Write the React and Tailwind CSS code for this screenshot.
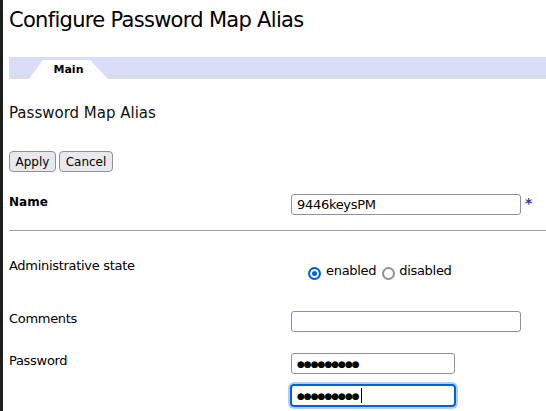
import React from "react";

function Radio({ checked }) {
  return (
    <span
      className={
        "mt-[4px] box-border inline-block h-[13px] w-[13px] shrink-0 rounded-full bg-white " +
        (checked
          ? "border-2 border-[#0060df] shadow-[inset_0_0_0_2px_#ffffff,inset_0_0_0_6px_#0060df]"
          : "border-2 border-[#8f8f9d]")
      }
    />
  );
}

function Dots({ caret }) {
  return (
    <span className="flex h-full items-center pl-[5px]">
      <span className="text-[9px] leading-[10px] tracking-[-1px] text-black">●●●●●●●●●</span>
      {caret && <span className="ml-[2px] inline-block h-[15px] w-[1px] bg-black" />}
    </span>
  );
}

export default function App() {
  return (
    <div className="flex h-[411px] w-[546px] overflow-hidden bg-white font-['DejaVu_Sans',sans-serif] text-black">
      <div className="w-[3px] shrink-0 bg-[#1e1e1e]" />
      <div className="flex min-w-0 flex-1 flex-col pl-[6px]">
        <h1 className="pt-[8px] text-[21px] leading-[24px] tracking-[-0.7px] font-normal text-black">
          Configure Password Map Alias
        </h1>

        <div className="mt-[25px] flex h-[22px] bg-[#d9ddf7] pl-[20px] shadow-[inset_0_-3px_0_#dddddd]">
          <div className="mt-[3px] flex h-[19px] w-[79px] items-center justify-center bg-white pb-[1px] text-[11px] font-bold leading-[13px] [clip-path:polygon(14px_0,61px_0,79px_100%,0_100%)]">
            Main
          </div>
        </div>

        <h2 className="mt-[25px] text-[15px] leading-[18px] font-normal text-[#111]">
          Password Map Alias
        </h2>

        <div className="mt-[29px] flex gap-[3px]">
          <button className="box-border h-[21px] w-[47px] rounded-[4px] border border-[#8f8f9d] bg-[#e9e9ed] text-[12px] leading-[14px] text-black">
            Apply
          </button>
          <button className="box-border h-[21px] w-[54px] rounded-[4px] border border-[#8f8f9d] bg-[#e9e9ed] text-[12px] leading-[14px] text-black">
            Cancel
          </button>
        </div>

        <div className="mt-[22px] grid grid-cols-[282px_1fr] text-[13px] leading-[16px] tracking-[-0.3px]">
          <div className="pt-[1px] text-[12px] leading-[14px] font-bold tracking-normal">Name</div>
          <div className="flex items-start">
            <div className="box-border flex h-[21px] w-[230px] items-center rounded-[3px] border border-[#8f8f9d] pl-[5px]">
              9446keysPM
            </div>
            <span className="ml-[4px] mt-[1px] text-[14px] font-bold leading-[16px] text-[#3b2fa8]">*</span>
          </div>
        </div>

        <div className="mt-[15px] h-px bg-[#a0a0a0]" />

        <div className="mt-[27px] grid grid-cols-[282px_1fr] text-[13px] leading-[16px] tracking-[-0.3px]">
          <div>Administrative state</div>
          <div className="mt-[5px] flex items-start pl-[17px]">
            <Radio checked />
            <span className="ml-[5px]">enabled</span>
            <span className="ml-[6px] flex items-start">
              <Radio />
              <span className="ml-[4px]">disabled</span>
            </span>
          </div>
        </div>

        <div className="mt-[31px] grid grid-cols-[282px_1fr] text-[13px] leading-[16px] tracking-[-0.3px]">
          <div>Comments</div>
          <div className="box-border h-[21px] w-[230px] rounded-[3px] border border-[#8f8f9d]" />
        </div>

        <div className="mt-[21px] grid grid-cols-[282px_1fr] text-[13px] leading-[16px] tracking-[-0.3px]">
          <div>Password</div>
          <div className="box-border h-[21px] w-[164px] rounded-[3px] border border-[#8f8f9d]">
            <Dots />
          </div>
        </div>

        <div className="mt-[10px] grid grid-cols-[282px_1fr] text-[13px] leading-[16px]">
          <div />
          <div className="ml-[-1px] box-border h-[23px] w-[166px] rounded-[4px] border-2 border-[#0060df] shadow-[0_0_0_2px_#b7cdf2]">
            <Dots caret />
          </div>
        </div>
      </div>
    </div>
  );
}
